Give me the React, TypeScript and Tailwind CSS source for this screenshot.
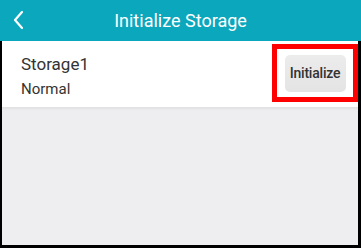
import React from "react";

const App: React.FC = () => {
    return (
        <div className="w-[361px] h-[248px] bg-black flex flex-col font-['Roboto',sans-serif]">
            {/* Header */}
            <div className="h-[41px] bg-[#0aa7bd] flex items-center relative shrink-0">
                <svg
                    className="absolute left-[12px] top-[10px]"
                    width="14"
                    height="20"
                    viewBox="0 0 14 20"
                    fill="none"
                >
                    <path d="M10 2 L3 10 L10 18" stroke="#ffffff" strokeWidth="2.2" strokeLinecap="round" strokeLinejoin="round" />
                </svg>
                <h1 className="w-full text-center text-white text-[18px] leading-none">Initialize Storage</h1>
            </div>

            {/* Body */}
            <div className="flex-1 flex flex-col ml-[2px] mr-[3px] mb-[3px] bg-[#eeeef0]">
                {/* Storage row */}
                <div className="h-[67px] bg-white flex items-center justify-between pl-[19px] pr-0 border-b border-[#e2e2e4] shadow-[0_1px_2px_rgba(0,0,0,0.06)]">
                    <div className="flex flex-col pt-[4px]">
                        <span className="text-[17px] leading-[20px] text-[#333333]">Storage1</span>
                        <span className="text-[15px] leading-[18px] mt-[6px] text-[#333333]">Normal</span>
                    </div>
                    <div className="border-[5px] border-[#ff0000] w-[86px] h-[58px] flex items-center justify-center mt-[-2px]">
                        <button
                            type="button"
                            className="w-[61px] h-[37px] rounded-[5px] bg-gradient-to-b from-[#ececec] to-[#e4e4e4] text-[14px] font-medium text-[#333333] tracking-[-0.2px] flex items-center justify-center"
                        >
                            Initialize
                        </button>
                    </div>
                </div>
            </div>
        </div>
    );
};

export default App;
